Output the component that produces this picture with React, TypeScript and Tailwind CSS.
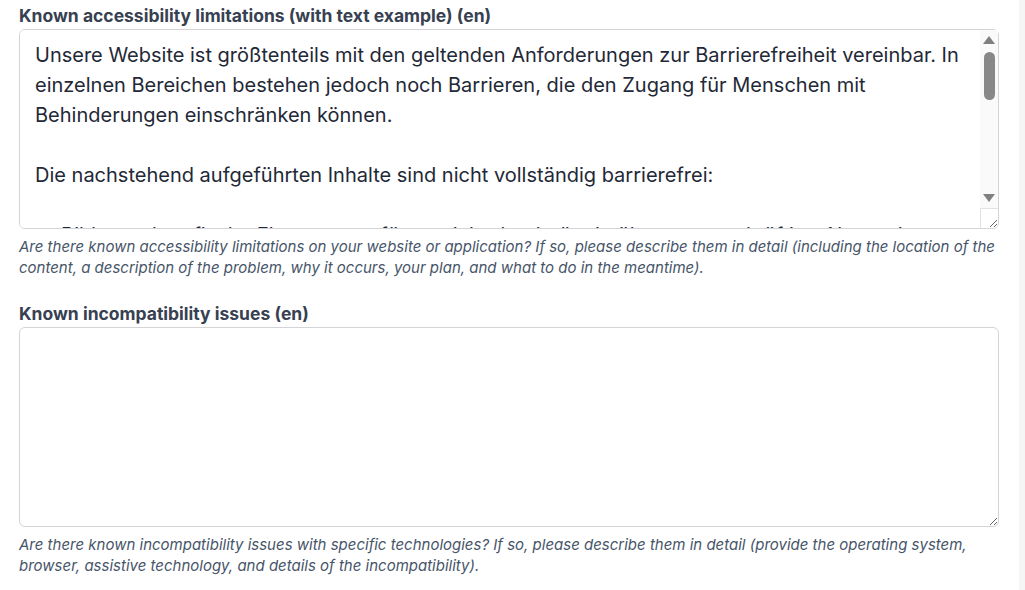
import { useState } from "react";

const limitationsText = `Unsere Website ist größtenteils mit den geltenden Anforderungen zur Barrierefreiheit vereinbar. In einzelnen Bereichen bestehen jedoch noch Barrieren, die den Zugang für Menschen mit Behinderungen einschränken können.

Die nachstehend aufgeführten Inhalte sind nicht vollständig barrierefrei:

  - Bilder und grafische Elemente verfügen nicht durchgängig über aussagekräftige Alternativtexte.
  - Einige PDF-Dokumente sind nicht vollständig barrierefrei gestaltet.
  - Videos sind teilweise nicht mit Untertiteln oder Audiodeskription versehen.
  - Einzelne Formulare sind nicht vollständig per Tastatur bedienbar.
  - Kontraste erfüllen an manchen Stellen nicht die Mindestanforderungen.

Wir arbeiten daran, diese Barrieren zu beseitigen. Bis dahin können Sie sich bei Fragen jederzeit an uns wenden.`;

// fake classic scrollbar drawn over the textarea (the native one is overlay in headless)
function Scrollbar() {
  return (
    <div className="absolute top-px right-px bottom-px w-[18px] flex flex-col pointer-events-none">
      <div className="flex-1 flex flex-col items-center bg-[#fafafa] pt-[6px] pb-[6px]">
        <div className="w-0 h-0 border-x-[6px] border-x-transparent border-b-[8px] border-b-[#808080]" />
        <div className="mt-[8px] w-[11px] h-[48px] rounded-full bg-[#888888]" />
        <div className="flex-1" />
        <div className="w-0 h-0 border-x-[6px] border-x-transparent border-t-[8px] border-t-[#808080]" />
      </div>
      <div className="h-[20px] border-t border-l border-[#e2e2e2]" />
    </div>
  );
}

function Field({
  label,
  help,
  value,
  onChange,
  scrollbar,
}: {
  label: string;
  help: string;
  value: string;
  onChange: (v: string) => void;
  scrollbar?: boolean;
}) {
  return (
    <div>
      <label className="block text-[17.5px] leading-6 font-bold text-[#374151] mb-px">{label}</label>
      <div className="relative">
        <textarea
          value={value}
          onChange={(e) => onChange(e.target.value)}
          className="block w-full h-[200px] border border-[#d4d4d8] rounded-md bg-white pl-[15px] pr-[26px] pt-[10px] pb-2 text-[20px] leading-[30px] text-[#1f2937] outline-none [scrollbar-width:none]"
        />
        {scrollbar && <Scrollbar />}
      </div>
      <p className="mt-[7px] text-[15px] leading-[21px] italic text-[#475569]">{help}</p>
    </div>
  );
}

export default function App() {
  const [form, setForm] = useState({ limitations: limitationsText, incompat: "" });

  return (
    <div className="flex w-[1025px] h-[590px] bg-white overflow-hidden" style={{ fontFamily: "Inter, 'Noto Sans', sans-serif" }}>
      <div className="flex-1 pl-[19px] pr-5 pt-1 space-y-[24px]">
        <Field
          label="Known accessibility limitations (with text example) (en)"
          help="Are there known accessibility limitations on your website or application? If so, please describe them in detail (including the location of the content, a description of the problem, why it occurs, your plan, and what to do in the meantime)."
          value={form.limitations}
          onChange={(v) => setForm({ ...form, limitations: v })}
          scrollbar
        />
        <Field
          label="Known incompatibility issues (en)"
          help="Are there known incompatibility issues with specific technologies? If so, please describe them in detail (provide the operating system, browser, assistive technology, and details of the incompatibility)."
          value={form.incompat}
          onChange={(v) => setForm({ ...form, incompat: v })}
        />
      </div>
      <div className="w-[6px] h-full bg-[#f5f5f5]" />
    </div>
  );
}
